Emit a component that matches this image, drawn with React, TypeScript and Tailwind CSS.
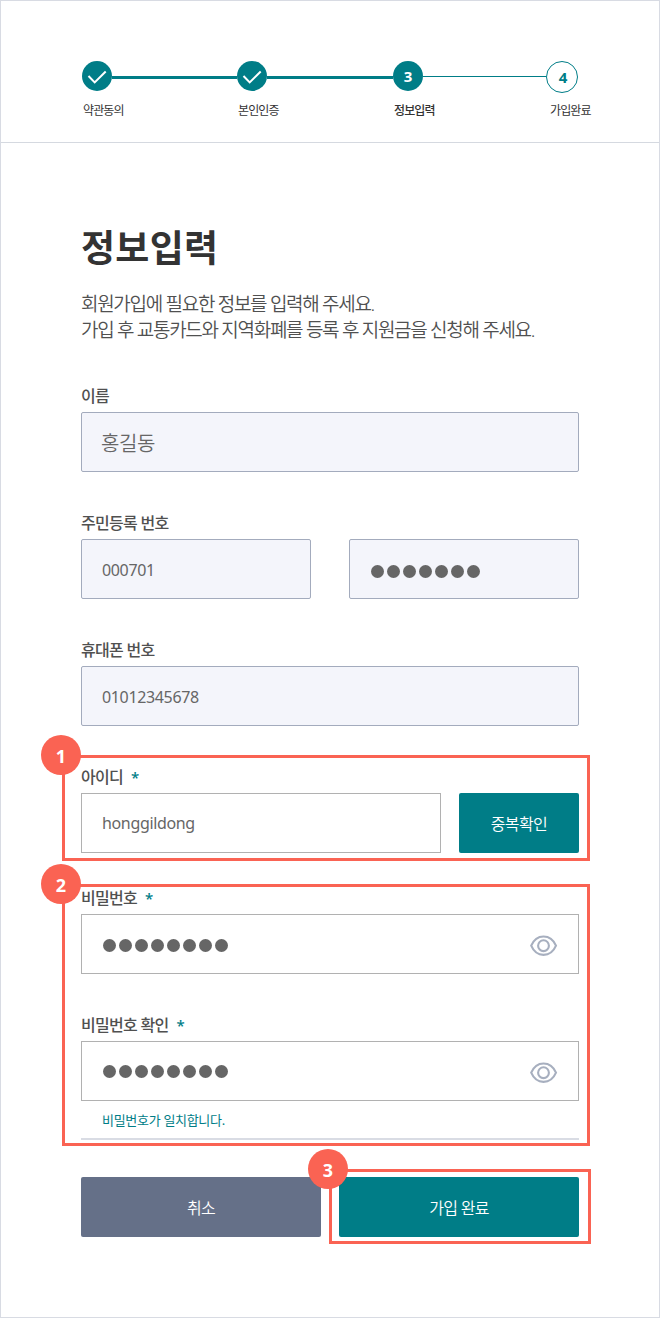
import type { ReactNode } from "react";
import clsx from "clsx";

function Check() {
  return (
    <svg width="30" height="30" viewBox="0 0 30 30" fill="none" stroke="#fff" strokeWidth="2">
      <path d="M6.5 15 L12.7 21.4 L23.7 10.5" />
    </svg>
  );
}

function Eye() {
  return (
    <svg width="28" height="22" viewBox="0 0 28 22" fill="none" stroke="#a7afbf" strokeWidth="2.1">
      <path d="M1.2 10.7 C3.8 4.6 8.2 1.5 13.5 1.5 S23.4 4.6 26 10.7 C23.4 16.8 18.8 19.9 13.5 19.9 S3.8 16.8 1.2 10.7 Z" />
      <circle cx="13.5" cy="10.7" r="5.4" />
    </svg>
  );
}

function Step({ label, width, current, last, line, children }: {
  label: string; width: string; current?: boolean; last?: boolean; line?: string; children: ReactNode;
}) {
  return (
    <li className={clsx("flex flex-col", width)}>
      <div className="flex h-8 items-start">
        <span
          className={clsx(
            "flex shrink-0 items-center justify-center rounded-full text-[15px] font-bold leading-none",
            last ? "size-8 border border-[#007d87] pl-0.5 text-[#007d87]" : "size-[30px] bg-[#007d87] text-white",
          )}
        >
          {children}
        </span>
        {line && <span className={clsx("mt-[15px] flex-1 bg-[#007d87]", line)} />}
      </div>
      <span
        className={clsx(
          "mt-2 whitespace-nowrap text-xs leading-5 tracking-[-0.9px] text-[#333]",
          last ? "ml-1" : "ml-px",
          current && "font-medium",
        )}
      >
        {label}
      </span>
    </li>
  );
}

function Label({ children, required }: { children: string; required?: boolean }) {
  return (
    <div className="mb-[3px] h-6 whitespace-nowrap text-base font-medium leading-[23px] tracking-[-0.7px] text-[#505050]">
      {children}
      {required && <span className="ml-2 text-[15px] text-[#007d87]">*</span>}
    </div>
  );
}

function Box({ children, filled, className }: { children: ReactNode; filled?: boolean; className?: string }) {
  return (
    <div
      className={clsx(
        "flex h-[60px] items-center border pl-5 tracking-[-0.35px] text-[#666]",
        filled ? "rounded-[2px] border-[#a3abbd] bg-[#f4f5fb]" : "border-[#b1b1b1] bg-white",
        className,
      )}
    >
      {children}
    </div>
  );
}

function Dots({ count }: { count: number }) {
  return (
    <span className="ml-px flex gap-[3px]">
      {Array.from({ length: count }, (_, i) => (
        <span key={i} className="size-[13px] rounded-full bg-[#666]" />
      ))}
    </span>
  );
}

function Callout({ n, className }: { n: number; className: string }) {
  return (
    <div className={clsx("pointer-events-none absolute border-[3px] border-[#fa6353]", className)}>
      <span className="absolute -left-6 -top-[23px] flex size-10 items-center justify-center rounded-full bg-[#fa6353] pt-0.5 text-lg font-bold leading-none text-white">
        {n}
      </span>
    </div>
  );
}

export default function App() {
  return (
    <div className="h-[1318px] w-[660px] overflow-hidden border border-[#d8dbe3] bg-white font-['Noto_Sans','Noto_Sans_CJK_KR',sans-serif]">
      <header className="h-[142px] border-b border-[#d5d9e0] pl-[81px] pt-[60px]">
        <ol className="flex">
          <Step label="약관동의" width="w-[155px]" line="h-[3px]"><Check /></Step>
          <Step label="본인인증" width="w-[156px]" line="h-[3px]"><Check /></Step>
          <Step label="정보입력" width="w-[153px]" line="h-px" current>3</Step>
          <Step label="가입완료" width="w-8" last>4</Step>
        </ol>
      </header>

      <main className="px-20 pt-20">
        <h1 className="h-[50px] whitespace-nowrap text-[37px] font-bold leading-[50px] tracking-[0.3px] text-[#333]">정보입력</h1>
        <p className="mt-[18px] h-[52px] whitespace-nowrap text-[19px] font-[350] leading-[26px] tracking-[-1.3px] text-[#505050]">
          회원가입에 필요한 정보를 입력해 주세요.
          <br />
          가입 후 교통카드와 지역화폐를 등록 후 지원금을 신청해 주세요.
        </p>

        <section className="mt-[42px]">
          <Label>이름</Label>
          <Box filled className="pt-1 text-xl"><span className="-ml-px font-[350]">홍길동</span></Box>
        </section>

        <section className="mt-10">
          <Label>주민등록 번호</Label>
          <div className="flex justify-between">
            <Box filled className="w-[230px] pt-0.5">000701</Box>
            <Box filled className="w-[230px] pt-1"><Dots count={7} /></Box>
          </div>
        </section>

        <section className="mt-10">
          <Label>휴대폰 번호</Label>
          <Box filled className="pt-0.5">01012345678</Box>
        </section>

        <section className="relative mt-10">
          <Label required>아이디</Label>
          <div className="flex justify-between">
            <Box className="w-[360px]">honggildong</Box>
            <button className="h-[60px] w-[120px] rounded-[2px] bg-[#007d87] pt-0.5 text-base font-[350] tracking-[-0.6px] text-white">
              중복확인
            </button>
          </div>
          <Callout n={1} className="-bottom-2 -left-[19px] -right-[11px] -top-[11px]" />
        </section>

        <div className="relative mt-[34px]">
          <section>
            <Label required>비밀번호</Label>
            <Box className="justify-between pr-5 pt-[3px]"><Dots count={8} /><Eye /></Box>
          </section>
          <section className="mt-10">
            <Label required>비밀번호 확인</Label>
            <Box className="justify-between pr-5"><Dots count={8} /><span className="pt-[3px]"><Eye /></span></Box>
          </section>
          <p className="mt-[9px] h-5 pl-[21px] text-[13px] leading-5 tracking-[-0.3px] text-[#007d87]">
            비밀번호가 일치합니다.
          </p>
          <hr className="mt-2 border-t-2 border-[#d9dce4]" />
          <Callout n={2} className="-bottom-1.5 -left-[19px] -right-[11px] -top-[3px]" />
        </div>

        <div className="mt-[37px] flex justify-between">
          <button className="h-[60px] w-60 rounded-[2px] bg-[#657088] pt-0.5 text-base font-[350] tracking-[-0.6px] text-white">취소</button>
          <div className="relative">
            <button className="h-[60px] w-60 rounded-[2px] bg-[#007d87] pt-0.5 text-base font-[350] tracking-[-0.7px] text-white">가입 완료</button>
            <Callout n={3} className="-bottom-[7px] -left-2.5 -right-3 -top-2" />
          </div>
        </div>
      </main>
    </div>
  );
}
